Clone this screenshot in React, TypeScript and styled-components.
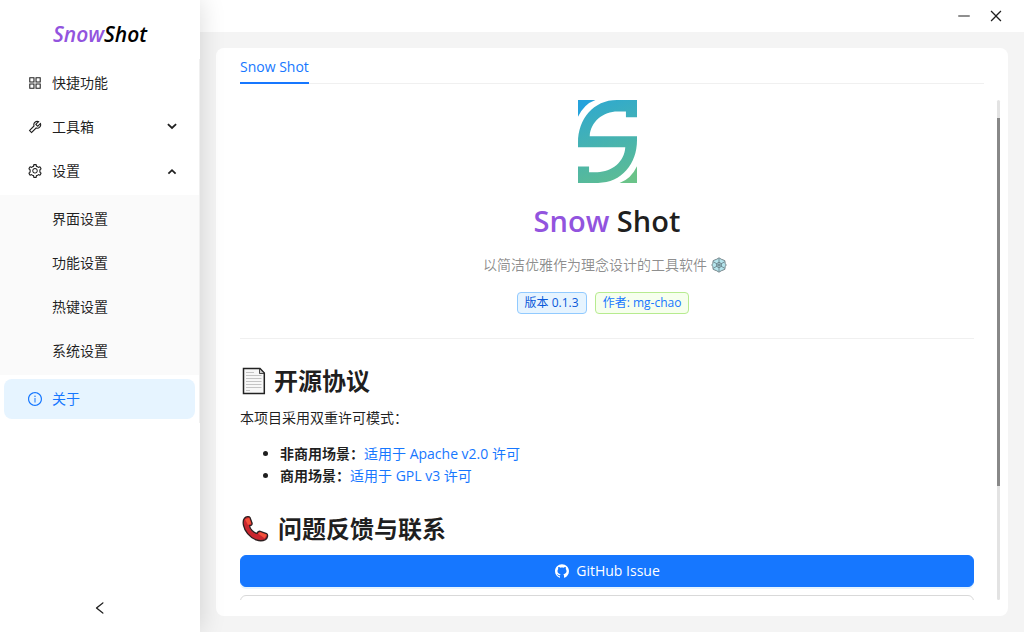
import React from "react";
import styled, { createGlobalStyle } from "styled-components";
import {
  AiOutlineAppstore,
  AiOutlineTool,
  AiOutlineSetting,
  AiOutlineInfoCircle,
  AiOutlineGithub,
  AiOutlineMinus,
  AiOutlineClose,
  AiOutlineLeft,
} from "react-icons/ai";

const GlobalStyle = createGlobalStyle`
  *, *::before, *::after { box-sizing: border-box; }
  html, body, #root { height: 100%; }
  body {
    margin: 0;
    color: rgba(0, 0, 0, 0.88);
    background: #f4f4f4;
    font-family: "Open Sans", "Noto Sans CJK SC", sans-serif;
    font-size: 14px;
    line-height: 22px;
  }
  button { font: inherit; color: inherit; cursor: pointer; }
  a { color: #1677ff; text-decoration: none; }
`;

const Shell = styled.div`
  display: flex;
  height: 100vh;
  overflow: hidden;
`;

const Sidebar = styled.aside`
  z-index: 1;
  display: flex;
  flex: 0 0 200px;
  flex-direction: column;
  background: #fff;
  box-shadow: 0 0 24px rgba(0, 0, 0, 0.15);
`;

const Purple = styled.span`
  color: #9254de;
`;

const Brand = styled.div`
  padding: 20px 0 11px;
  color: #000;
  font-size: 21px;
  font-style: italic;
  font-weight: 600;
  line-height: 28px;
  text-align: center;
`;

const Menu = styled.nav`
  padding: 4px 0;
  border-right: 1px solid #f0f0f0;
`;

const MenuList = styled.ul`
  display: flex;
  flex-direction: column;
  gap: 4px;
  margin: 0;
  padding: 0;
  list-style: none;
`;

const SubMenuList = styled(MenuList)`
  margin-top: 4px;
  padding: 4px 0;
  background: #fafafa;
`;

const MenuButton = styled.button<{ $active?: boolean; $nested?: boolean }>`
  display: flex;
  align-items: center;
  gap: 9px;
  width: calc(100% - 8px);
  height: 40px;
  margin: 0 4px;
  padding: 0 18px 0 ${(p) => (p.$nested ? 48 : 23)}px;
  border: 0;
  border-radius: 8px;
  background: ${(p) => (p.$active ? "#e6f4ff" : "transparent")};
  color: ${(p) => (p.$active ? "#1677ff" : "inherit")};
  text-align: left;

  > svg { flex: none; }
`;

const MenuLabel = styled.span`
  flex: 1;
`;

const CollapseButton = styled.button`
  display: flex;
  justify-content: center;
  margin-top: auto;
  padding: 16px 0;
  border: 0;
  background: transparent;
`;

const Main = styled.div`
  display: flex;
  flex: 1;
  flex-direction: column;
  min-width: 0;
`;

const TitleBar = styled.header`
  display: flex;
  flex: 0 0 32px;
  align-items: center;
  justify-content: flex-end;
  gap: 16px;
  padding: 0 20px;
  background: #fff;
`;

const WindowButton = styled.button`
  display: flex;
  padding: 0;
  border: 0;
  background: transparent;
`;

const Card = styled.main`
  display: flex;
  flex: 1;
  flex-direction: column;
  gap: 16px;
  min-height: 0;
  margin: 16px;
  padding: 8px 8px 16px 24px;
  border-radius: 8px;
  background: #fff;
`;

const Tabs = styled.div`
  display: flex;
  margin-right: 16px;
  box-shadow: inset 0 -1px #f0f0f0;
`;

const Tab = styled.button`
  height: 28px;
  padding: 0 0 4px;
  border: 0;
  border-bottom: 2px solid #1677ff;
  background: transparent;
  color: #1677ff;
`;

const ScrollRow = styled.div`
  display: flex;
  flex: 1;
  gap: 23px;
  min-height: 0;
`;

const Content = styled.div`
  flex: 1;
  min-width: 0;
  overflow: hidden;
`;

const ScrollTrack = styled.div`
  flex: 0 0 3px;
  padding-top: 18px;
  border-radius: 2px;
  background: #e3e3e3;
`;

const ScrollThumb = styled.div`
  height: 368px;
  max-height: 77%;
  background: #888;
`;

const Hero = styled.section`
  display: flex;
  flex-direction: column;
  align-items: center;
  padding-bottom: 24px;
  border-bottom: 1px solid #f0f0f0;
`;

const Title = styled.h1`
  margin: 18px 0 13px;
  font-size: 29px;
  font-weight: 600;
  line-height: 40px;
`;

const Slogan = styled.p`
  display: flex;
  align-items: center;
  gap: 4px;
  margin: 0 0 16px;
  color: rgba(0, 0, 0, 0.45);
`;

const TagRow = styled.div`
  display: flex;
`;

const Tag = styled.span<{ $tone: "blue" | "green" }>`
  margin-right: 8px;
  padding: 0 7px;
  border: 1px solid ${(p) => (p.$tone === "blue" ? "#91caff" : "#b7eb8f")};
  border-radius: 4px;
  background: ${(p) => (p.$tone === "blue" ? "#e6f4ff" : "#f6ffed")};
  color: #0958d9;
  font-size: 12px;
  line-height: 20px;
`;

const SectionTitle = styled.h2`
  display: flex;
  align-items: center;
  gap: 8px;
  margin: 26px 0 10px;
  font-size: 24px;
  font-weight: 700;
  line-height: 32px;
`;

const Paragraph = styled.p`
  margin: 0 0 14px;
`;

const LicenseList = styled.ul`
  margin: 0;
  padding-left: 40px;
`;

const ButtonStack = styled.div`
  display: flex;
  flex-direction: column;
  gap: 8px;
`;

const ActionButton = styled.button<{ $primary?: boolean }>`
  display: flex;
  align-items: center;
  justify-content: center;
  gap: 6px;
  width: 100%;
  height: 32px;
  border: 1px solid ${(p) => (p.$primary ? "#1677ff" : "#d9d9d9")};
  border-radius: 6px;
  background: ${(p) => (p.$primary ? "#1677ff" : "#fff")};
  color: ${(p) => (p.$primary ? "#fff" : "inherit")};
  box-shadow: 0 2px 0 ${(p) => (p.$primary ? "rgba(5, 145, 255, 0.1)" : "rgba(0, 0, 0, 0.02)")};
`;

const Arrow = ({ open }: { open?: boolean }) => (
  <svg width="10" height="8" viewBox="0 0 10 8" fill="none" stroke="currentColor" strokeWidth="1.8" aria-hidden>
    <path d={open ? "M1.4 6.6 5 3.2 8.6 6.6" : "M.9 1.2 5 5 9.1 1.2"} />
  </svg>
);

const Logo = () => (
  <svg width="59" height="83" viewBox="0 0 176 247" role="img" aria-label="Snow Shot">
    <defs>
      <linearGradient id="brand" gradientUnits="userSpaceOnUse" x1="30" y1="0" x2="110" y2="247">
        <stop offset="0" stopColor="#2fa9cf" />
        <stop offset="1" stopColor="#5cbc94" />
      </linearGradient>
    </defs>
    <path d="M0 0H52Q18 12 0 50Z" fill="#25a2db" />
    <path d="M176 247H124Q158 235 176 197Z" fill="#6ac389" />
    <path
      fill="url(#brand)"
      d="M176 0V51H143V34H118C76 34 37 64 35 108H176V120C176 190 130 247 60 247H0V198H33V215H58C100 215 139 185 141 141H0V127C0 57 46 0 116 0Z"
    />
  </svg>
);

const Snowflake = () => (
  <svg width="20" height="16" viewBox="0 0 20 16" fill="none" aria-hidden>
    <path
      d="M8 .8 10.2 2.2 13.8 3.6 14.2 6.4 15.2 8 14.2 9.6 13.8 12.4 10.2 13.8 8 15.2 5.8 13.8 2.2 12.4 1.8 9.6.8 8 1.8 6.4 2.2 3.6 5.8 2.2Z"
      fill="#b4e4ec"
      stroke="#75858a"
      strokeLinejoin="round"
    />
    <path
      d="M8 1.5V14.5M2.4 4.8 13.6 11.2M2.4 11.2 13.6 4.8M8 5.2 10.4 6.6V9.4L8 10.8 5.6 9.4V6.6Z"
      stroke="#6b858c"
      strokeWidth=".9"
    />
  </svg>
);

const PageIcon = () => (
  <svg width="26" height="28" viewBox="0 0 26 28" aria-hidden>
    <path d="M3.5 1.5H20L24.3 6V26.5H3.5Z" fill="#f7f7f7" stroke="#222" strokeWidth="1.5" />
    <path d="M19.5 1.5V6.5H24.3Z" fill="#ccc" stroke="#222" strokeWidth=".8" />
    <path
      d="M6 5.5H14M6 8.5H21.5M6 11.5H21.5M6 14.5H21.5M6 17.5H21.5M6 20.5H21.5M6 23.5H10"
      stroke="#c4c4c4"
    />
  </svg>
);

const PhoneIcon = () => (
  <svg width="30" height="28" viewBox="0 0 30 28" aria-hidden>
    <path
      d="M4.5 3.2C6 1.5 9.2 1.2 10 2.5L12 8C12.4 9.6 11.6 10.4 9.6 10.7C9.8 14 13.4 17.8 17 18.4C17.6 16.8 18.8 16 20.2 16.4L26.5 18.7C28.4 19.6 27.6 23.3 25.4 24.6C20 27.6 12.2 24.4 7.6 18.7C3.2 13.3 2 6.4 4.5 3.2Z"
      fill="#c9252d"
      stroke="#2c1f20"
      strokeWidth="1.3"
    />
    <path d="M5 4.2 9.2 2.8 11.2 8.4 8 10ZM18 18.6 20.2 17.2 26.8 19.8 24.6 23.2Z" fill="#f4513a" />
  </svg>
);

const settings = ["界面设置", "功能设置", "热键设置", "系统设置"];

const licenses = [
  { scene: "非商用场景：", text: "适用于 Apache v2.0 许可" },
  { scene: "商用场景：", text: "适用于 GPL v3 许可" },
];

export default function App() {
  return (
    <>
      <GlobalStyle />
      <Shell>
        <Sidebar>
          <Brand>
            <Purple>Snow</Purple>Shot
          </Brand>
          <Menu>
            <MenuList>
              <li>
                <MenuButton>
                  <AiOutlineAppstore size={16} />
                  <MenuLabel>快捷功能</MenuLabel>
                </MenuButton>
              </li>
              <li>
                <MenuButton aria-expanded={false}>
                  <AiOutlineTool size={16} />
                  <MenuLabel>工具箱</MenuLabel>
                  <Arrow />
                </MenuButton>
              </li>
              <li>
                <MenuButton aria-expanded>
                  <AiOutlineSetting size={16} />
                  <MenuLabel>设置</MenuLabel>
                  <Arrow open />
                </MenuButton>
                <SubMenuList>
                  {settings.map((name) => (
                    <li key={name}>
                      <MenuButton $nested>{name}</MenuButton>
                    </li>
                  ))}
                </SubMenuList>
              </li>
              <li>
                <MenuButton $active aria-current="page">
                  <AiOutlineInfoCircle size={16} />
                  <MenuLabel>关于</MenuLabel>
                </MenuButton>
              </li>
            </MenuList>
          </Menu>
          <CollapseButton aria-label="收起">
            <AiOutlineLeft size={16} />
          </CollapseButton>
        </Sidebar>
        <Main>
          <TitleBar>
            <WindowButton aria-label="最小化">
              <AiOutlineMinus size={16} />
            </WindowButton>
            <WindowButton aria-label="关闭">
              <AiOutlineClose size={16} />
            </WindowButton>
          </TitleBar>
          <Card>
            <Tabs role="tablist">
              <Tab role="tab" aria-selected>
                Snow Shot
              </Tab>
            </Tabs>
            <ScrollRow>
              <Content>
                <Hero>
                  <Logo />
                  <Title>
                    <Purple>Snow</Purple> Shot
                  </Title>
                  <Slogan>
                    以简洁优雅作为理念设计的工具软件
                    <Snowflake />
                  </Slogan>
                  <TagRow>
                    <Tag $tone="blue">版本 0.1.3</Tag>
                    <Tag $tone="green">
                      <a href="#author">作者: mg-chao</a>
                    </Tag>
                  </TagRow>
                </Hero>
                <SectionTitle>
                  <PageIcon />
                  开源协议
                </SectionTitle>
                <Paragraph>本项目采用双重许可模式：</Paragraph>
                <LicenseList>
                  {licenses.map((item) => (
                    <li key={item.scene}>
                      <strong>{item.scene}</strong>
                      <a href="#license">{item.text}</a>
                    </li>
                  ))}
                </LicenseList>
                <SectionTitle>
                  <PhoneIcon />
                  问题反馈与联系
                </SectionTitle>
                <ButtonStack>
                  <ActionButton $primary>
                    <AiOutlineGithub size={16} />
                    GitHub Issue
                  </ActionButton>
                  <ActionButton aria-label="GitHub" />
                </ButtonStack>
              </Content>
              <ScrollTrack>
                <ScrollThumb />
              </ScrollTrack>
            </ScrollRow>
          </Card>
        </Main>
      </Shell>
    </>
  );
}
